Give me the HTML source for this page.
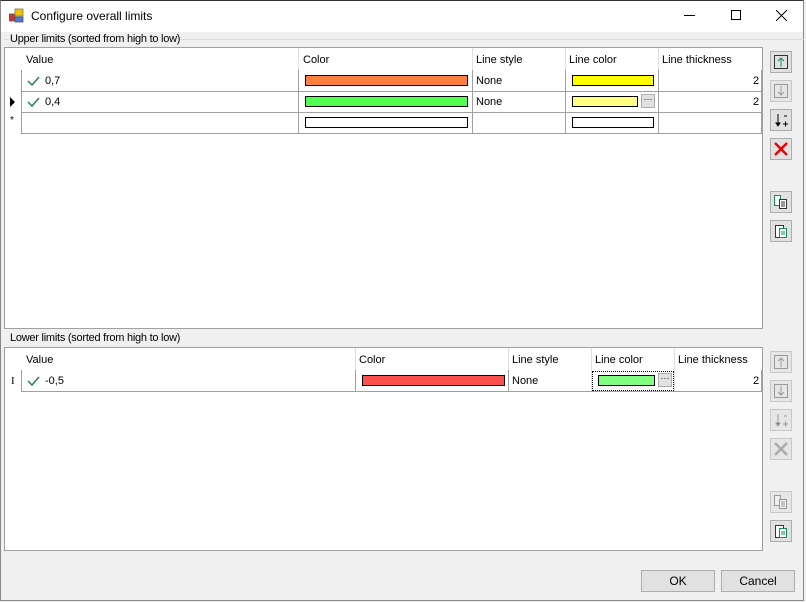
<!DOCTYPE html><html><head><style>
*{box-sizing:border-box;margin:0;padding:0}
body{width:806px;height:602px;background:#f0f0f0;font-family:"Liberation Sans",sans-serif;font-size:11px;color:#000;position:relative;overflow:hidden}
.a{position:absolute}
.win{left:0;top:0;width:804px;height:601px;border:1px solid #888;border-top:1px solid #333;background:#f0f0f0}
.title{left:1px;top:1px;width:802px;height:31px;background:#fff}
.grid{background:#fff;border:1px solid #a0a0a0}
.vl{position:absolute;width:1px;background:#a0a0a0}
.hl{position:absolute;height:1px;background:#a0a0a0}
.hd{position:absolute;top:6px}
.sw{position:absolute;height:11px;border:1px solid #000}
.btn{position:absolute;width:22px;height:22px;background:#e1e1e1;border:1px solid #adadad}
.btn svg{position:absolute;left:2px;top:2px}
.dis{background:#e6e6e6;border-color:#c8c8c8}
.ck{position:absolute;width:13px;height:12px}
.pb{position:absolute;width:14px;height:14px;background:#e1e1e1;border:1px solid #adadad;font-size:9px;line-height:8px;text-align:center}
.cmd{position:absolute;width:74px;height:22px;background:#e1e1e1;border:1px solid #adadad;text-align:center;line-height:20px;font-size:12px}
.lbl{background:#f0f0f0;padding:0 1px;letter-spacing:-0.25px}
</style></head><body>
<div class="a win"></div>
<div class="a title"></div>
<svg class="a" style="left:9px;top:8px" width="16" height="16"><rect x="0" y="6" width="6" height="7" fill="#c33" stroke="#555" stroke-width=".8"/><rect x="6" y="1" width="8" height="7" fill="#f2c200" stroke="#777" stroke-width=".8"/><rect x="6" y="9" width="8" height="5" fill="#4a7ad8" stroke="#555" stroke-width=".8"/></svg>
<div class="a" style="left:31px;top:9px;font-size:12px">Configure overall limits</div>
<div class="a" style="left:684px;top:15px;width:11px;height:1px;background:#000"></div>
<div class="a" style="left:731px;top:10px;width:10px;height:10px;border:1px solid #000"></div>
<svg class="a" style="left:776px;top:10px" width="11" height="11"><path d="M0 0L11 11M11 0L0 11" stroke="#000" stroke-width="1"/></svg>

<div class="a" style="left:4px;top:39px;width:800px;height:1px;background:#dcdcdc"></div>
<div class="a lbl" style="left:9px;top:33px">Upper limits (sorted from high to low)</div>
<div class="a grid" style="left:4px;top:47px;width:759px;height:282px">
 <div class="vl" style="left:16px;top:22px;height:64px"></div>
 <div class="vl" style="left:293px;top:0;height:86px;background:#e0e0e0"></div><div class="vl" style="left:293px;top:22px;height:64px"></div>
 <div class="vl" style="left:467px;top:0;height:86px;background:#e0e0e0"></div><div class="vl" style="left:467px;top:22px;height:64px"></div>
 <div class="vl" style="left:560px;top:0;height:86px;background:#e0e0e0"></div><div class="vl" style="left:560px;top:22px;height:64px"></div>
 <div class="vl" style="left:653px;top:0;height:86px;background:#e0e0e0"></div><div class="vl" style="left:653px;top:22px;height:64px"></div>
 <div class="vl" style="left:756px;top:22px;height:64px"></div>
 <div class="hl" style="left:16px;top:43px;width:741px"></div>
 <div class="hl" style="left:16px;top:64px;width:741px"></div>
 <div class="hl" style="left:16px;top:85px;width:741px"></div>
 <div class="hd" style="left:21px">Value</div><div class="hd" style="left:298px">Color</div><div class="hd" style="left:471px">Line style</div><div class="hd" style="left:564px">Line color</div><div class="hd" style="left:657px">Line thickness</div>
 <svg class="ck" style="left:22px;top:27px"><path d="M1 6L5 10L12 2" stroke="#2e7d5a" stroke-width="1.5" fill="none"/></svg><div class="a" style="left:40px;top:27px">0,7</div>
 <svg class="ck" style="left:22px;top:48px"><path d="M1 6L5 10L12 2" stroke="#2e7d5a" stroke-width="1.5" fill="none"/></svg><div class="a" style="left:40px;top:48px">0,4</div>
 <svg class="a" style="left:5px;top:49px" width="6" height="10"><path d="M0 0L5 5L0 10Z"/></svg>
 <div class="a" style="left:5px;top:67px;font-size:10px">*</div>
 <div class="sw" style="left:300px;top:27px;width:163px;background:#ff7f40"></div>
 <div class="sw" style="left:300px;top:48px;width:163px;background:#50ff50"></div>
 <div class="sw" style="left:300px;top:69px;width:163px;background:#fff"></div>
 <div class="a" style="left:471px;top:27px">None</div><div class="a" style="left:471px;top:48px">None</div>
 <div class="sw" style="left:567px;top:27px;width:82px;background:#ffff00"></div>
 <div class="sw" style="left:567px;top:48px;width:66px;background:#ffff80"></div>
 <div class="pb" style="left:636px;top:46px">···</div>
 <div class="sw" style="left:567px;top:69px;width:82px;background:#fff"></div>
 <div class="a" style="left:748px;top:27px">2</div><div class="a" style="left:748px;top:48px">2</div>
</div>

<div class="a lbl" style="left:9px;top:332px">Lower limits (sorted from high to low)</div>
<div class="a grid" style="left:4px;top:347px;width:759px;height:204px">
 <div class="vl" style="left:16px;top:22px;height:22px"></div>
 <div class="vl" style="left:350px;top:0;height:44px;background:#e0e0e0"></div><div class="vl" style="left:350px;top:22px;height:22px"></div>
 <div class="vl" style="left:503px;top:0;height:44px;background:#e0e0e0"></div><div class="vl" style="left:503px;top:22px;height:22px"></div>
 <div class="vl" style="left:586px;top:0;height:44px;background:#e0e0e0"></div>
 <div class="vl" style="left:669px;top:0;height:44px;background:#e0e0e0"></div>
 <div class="vl" style="left:756px;top:22px;height:22px"></div>
 <div class="hl" style="left:16px;top:43px;width:741px"></div>
 <div class="hd" style="left:21px">Value</div><div class="hd" style="left:354px">Color</div><div class="hd" style="left:507px">Line style</div><div class="hd" style="left:590px">Line color</div><div class="hd" style="left:673px">Line thickness</div>
 <div class="a" style="left:6px;top:27px;font-size:11px;font-family:'Liberation Serif',serif">I</div>
 <svg class="ck" style="left:22px;top:27px"><path d="M1 6L5 10L12 2" stroke="#2e7d5a" stroke-width="1.5" fill="none"/></svg><div class="a" style="left:40px;top:27px">-0,5</div>
 <div class="sw" style="left:357px;top:27px;width:143px;background:#ff5050"></div>
 <div class="a" style="left:507px;top:27px">None</div>
 <div class="a" style="left:587px;top:23px;width:82px;height:20px;border:1px dotted #000"></div>
 <div class="sw" style="left:593px;top:27px;width:57px;background:#80ff80"></div>
 <div class="pb" style="left:653px;top:25px">···</div>
 <div class="a" style="left:748px;top:27px">2</div>
</div>

<div class="btn" style="left:770px;top:51px"><svg width="16" height="16"><rect x="1.5" y="1.5" width="13" height="13" fill="none" stroke="#333"/><path d="M8 13V4M5 7L8 4L11 7" stroke="#1a8a5a" fill="none"/></svg></div>
<div class="btn dis" style="left:770px;top:80px"><svg width="16" height="16"><rect x="1.5" y="1.5" width="13" height="13" fill="none" stroke="#999"/><path d="M8 3V12M5 9L8 12L11 9" stroke="#999" fill="none"/></svg></div>
<div class="btn" style="left:770px;top:109px"><svg width="16" height="16"><path d="M5 2V13M3 11L5 14L7 11Z" stroke="#000"/><path d="M11 4H14M10 12H15M12.5 9.5V14.5" stroke="#000"/></svg></div>
<div class="btn" style="left:770px;top:138px"><svg width="16" height="16"><path d="M2 2L14 14M14 2L2 14" stroke="#e00" stroke-width="2.4"/></svg></div>
<div class="btn" style="left:770px;top:191px"><svg width="16" height="16"><path d="M1.5 1.5H7.5V11.5H1.5Z" fill="#fff" stroke="#1a8a5a"/><path d="M6.5 5.5H13.5V14.5H6.5Z" fill="#fff" stroke="#333"/><path d="M8 8H12M8 10H12M8 12H12" stroke="#333"/></svg></div>
<div class="btn" style="left:770px;top:220px"><svg width="16" height="16"><path d="M2.5 2.5H10.5V14.5H2.5Z" fill="#fff" stroke="#333"/><path d="M6.5 5.5H13.5V14.5H6.5Z" fill="#fff" stroke="#1a8a5a"/><path d="M8 9H12M8 11H12" stroke="#1a8a5a"/></svg></div>

<div class="btn dis" style="left:770px;top:351px"><svg width="16" height="16"><rect x="1.5" y="1.5" width="13" height="13" fill="none" stroke="#999"/><path d="M8 13V4M5 7L8 4L11 7" stroke="#999" fill="none"/></svg></div>
<div class="btn dis" style="left:770px;top:380px"><svg width="16" height="16"><rect x="1.5" y="1.5" width="13" height="13" fill="none" stroke="#999"/><path d="M8 3V12M5 9L8 12L11 9" stroke="#999" fill="none"/></svg></div>
<div class="btn dis" style="left:770px;top:409px"><svg width="16" height="16"><path d="M5 2V13M3 11L5 14L7 11Z" stroke="#999"/><path d="M11 4H14M10 12H15M12.5 9.5V14.5" stroke="#999"/></svg></div>
<div class="btn dis" style="left:770px;top:438px"><svg width="16" height="16"><path d="M2 2L14 14M14 2L2 14" stroke="#aaa" stroke-width="2.4"/></svg></div>
<div class="btn dis" style="left:770px;top:491px"><svg width="16" height="16"><path d="M1.5 1.5H7.5V11.5H1.5Z" fill="#eee" stroke="#999"/><path d="M6.5 5.5H13.5V14.5H6.5Z" fill="#eee" stroke="#999"/><path d="M8 8H12M8 10H12M8 12H12" stroke="#999"/></svg></div>
<div class="btn" style="left:770px;top:520px"><svg width="16" height="16"><path d="M2.5 2.5H10.5V14.5H2.5Z" fill="#fff" stroke="#333"/><path d="M6.5 5.5H13.5V14.5H6.5Z" fill="#fff" stroke="#1a8a5a"/><path d="M8 9H12M8 11H12" stroke="#1a8a5a"/></svg></div>

<div class="cmd" style="left:641px;top:570px">OK</div>
<div class="cmd" style="left:721px;top:570px">Cancel</div>
</body></html>
